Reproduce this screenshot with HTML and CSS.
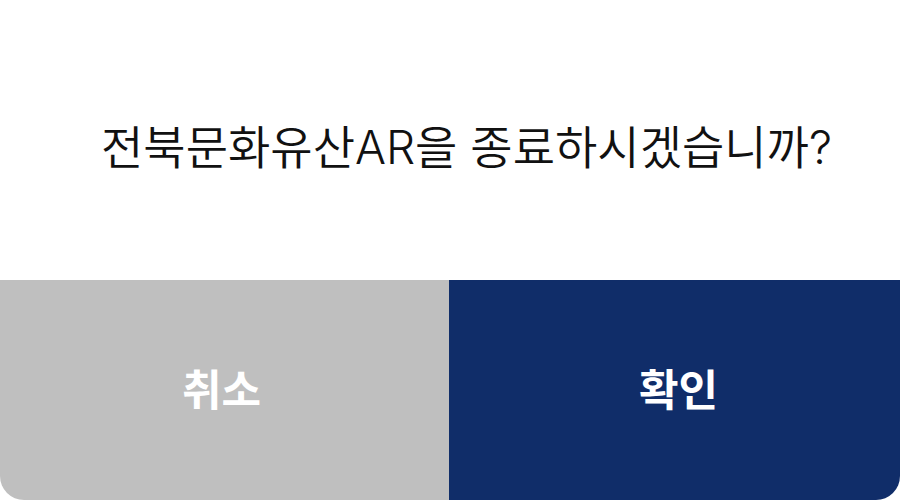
FILE: index.html
```html
<!DOCTYPE html>
<html lang="ko">
<head>
<meta charset="utf-8">
<link rel="stylesheet" href="styles.css">
</head>
<body>
<div class="dialog">
  <div class="message">전북문화유산AR을 종료하시겠습니까?</div>
  <div class="actions">
    <button class="btn cancel">취소</button>
    <button class="btn confirm">확인</button>
  </div>
</div>
</body>
</html>
```
FILE: styles.css
```css
html, body {
  margin: 0;
  padding: 0;
  background: #ffffff;
}
.dialog {
  width: 900px;
  height: 500px;
  display: flex;
  flex-direction: column;
  background: #ffffff;
  border-radius: 0 0 24px 24px;
  overflow: hidden;
  font-family: Inter, "Noto Sans CJK KR", sans-serif;
}
.message {
  height: 280px;
  display: flex;
  align-items: center;
  justify-content: center;
  padding: 8px 0 0 33px;
  box-sizing: border-box;
  font-size: 46px;
  font-weight: 350;
  letter-spacing: 0;
  color: #111111;
}
.actions {
  flex: 1;
  display: grid;
  grid-template-columns: 449px 451px;
}
.btn {
  border: none;
  margin: 0;
  padding: 0 0 6px 0;
  font-family: Inter, "Noto Sans CJK KR", sans-serif;
  font-size: 43px;
  font-weight: 700;
  color: #ffffff;
}
.cancel {
  background: #bfbfbf;
  padding-right: 6px;
}
.confirm {
  background: #102d69;
  padding-left: 8px;
}
```
